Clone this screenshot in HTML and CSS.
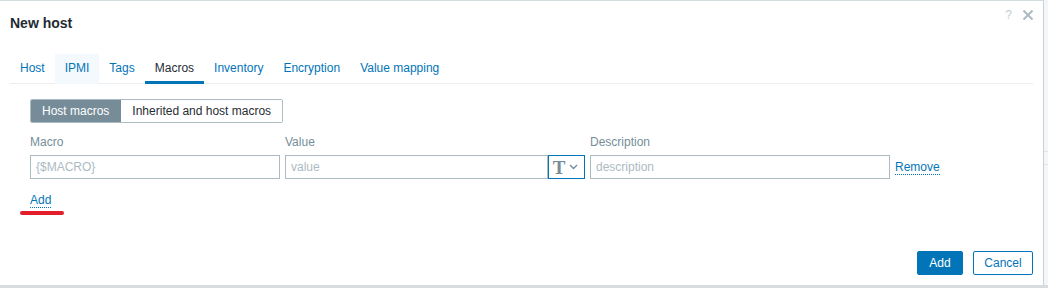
FILE: index.html
```html
<!DOCTYPE html>
<html lang="en">
<head>
    <meta charset="UTF-8">
    <meta name="viewport" content="width=device-width, initial-scale=1.0">
    <title>New host</title>
    <link rel="stylesheet" href="styles.css">
</head>
<body>
    <div class="page">
        <div class="dialog">
            <!-- Header -->
            <div class="dialog-header">
                <h4>New host</h4>
                <div class="header-controls">
                    <span class="help-btn">?</span>
                    <span class="close-btn">
                        <svg width="12" height="12" viewBox="0 0 12 12"><path d="M1.5 1.5 L10.5 10.5 M10.5 1.5 L1.5 10.5" stroke="#acbbc2" stroke-width="2" fill="none"/></svg>
                    </span>
                </div>
            </div>

            <!-- Tabs -->
            <ul class="tabs">
                <li><a href="#">Host</a></li>
                <li class="hover"><a href="#">IPMI</a></li>
                <li><a href="#">Tags</a></li>
                <li class="active"><a href="#">Macros</a></li>
                <li><a href="#">Inventory</a></li>
                <li><a href="#">Encryption</a></li>
                <li><a href="#">Value mapping</a></li>
            </ul>

            <!-- Macros tab -->
            <div class="tab-body">
                <div class="radio-segmented">
                    <span class="seg selected">Host macros</span>
                    <span class="seg">Inherited and host macros</span>
                </div>

                <div class="macro-table">
                    <div class="col-label">Macro</div>
                    <div class="col-label">Value</div>
                    <div class="col-label">Description</div>
                    <div></div>

                    <input class="field macro-field" type="text" placeholder="{$MACRO}">
                    <div class="value-group">
                        <input class="field" type="text" placeholder="value">
                        <button class="type-btn">
                            <span class="type-t">T</span>
                            <svg width="9" height="6" viewBox="0 0 9 6"><path d="M1 1 L4.5 4.5 L8 1" stroke="#768d99" stroke-width="1.4" fill="none"/></svg>
                        </button>
                    </div>
                    <input class="field desc-field" type="text" placeholder="description">
                    <a class="link-action" href="#">Remove</a>
                </div>

                <a class="link-action add-link" href="#">Add</a>
                <div class="marker"></div>
            </div>

            <!-- Footer -->
            <div class="dialog-footer">
                <button class="btn btn-primary">Add</button>
                <button class="btn btn-alt">Cancel</button>
            </div>
        </div>
        <div class="backdrop-edge">
            <div class="edge-line"></div>
            <div class="edge-line"></div>
        </div>
    </div>
</body>
</html>
```

FILE: styles.css
```css
* {
    box-sizing: border-box;
}

body {
    margin: 0;
    font-family: "Liberation Sans", Arial, sans-serif;
    font-size: 12px;
    color: #1f2c33;
    background: #d6dcdf;
}

.page {
    display: flex;
    height: 288px;
    overflow: hidden;
}

/* Dialog */
.dialog {
    width: 1044px;
    height: 285px;
    background: #fff;
    border-top: 1px solid #d5dde1;
    border-right: 1px solid #c8d0d4;
    display: flex;
    flex-direction: column;
    flex-shrink: 0;
}

.backdrop-edge {
    flex: 1;
    background: #f4f6f7;
    height: 285px;
    padding-top: 151px;
}

.edge-line {
    height: 1px;
    background: #dfe4e7;
    margin-bottom: 12px;
}

.dialog-header {
    display: flex;
    justify-content: space-between;
    padding: 0 9px 0 10px;
    height: 42px;
    align-items: flex-start;
}

.dialog-header h4 {
    margin: 14px 0 0;
    font-size: 14px;
    font-weight: bold;
    color: #1f2c33;
}

.header-controls {
    display: flex;
    gap: 10px;
    margin-top: 7px;
    align-items: center;
}

.help-btn {
    color: #c3ced3;
    font-size: 12px;
}

.close-btn {
    display: flex;
}

/* Tabs */
.tabs {
    list-style: none;
    margin: 11px 10px 0;
    padding: 0;
    display: flex;
    border-bottom: 1px solid #ebeef0;
}

.tabs li {
    height: 30px;
    padding: 0 10px;
    display: flex;
    align-items: center;
    border-bottom: 3px solid transparent;
    margin-bottom: -1px;
    padding-top: 1px;
}

.tabs li a {
    color: #0275b8;
    text-decoration: none;
}

.tabs li.hover {
    background: #f3f9fd;
}

.tabs li.active {
    border-bottom-color: #0275b8;
}

.tabs li.active a {
    color: #1f2c33;
}

/* Body */
.tab-body {
    padding: 15px 30px 0;
    flex: 1;
}

.radio-segmented {
    display: inline-flex;
    border: 1px solid #acbbc2;
    border-radius: 2px;
    height: 24px;
    overflow: hidden;
}

.seg {
    padding: 0 11px;
    display: flex;
    align-items: center;
    color: #1f2c33;
    background: #fff;
}

.seg.selected {
    background: #768d99;
    color: #fff;
    border-right: 1px solid #768d99;
}

.macro-table {
    display: grid;
    grid-template-columns: 250px 300px 300px auto;
    column-gap: 5px;
    margin-top: 10px;
    align-items: center;
}

.col-label {
    color: #768d99;
    height: 22px;
    line-height: 16px;
    padding-top: 1px;
}

.field {
    height: 24px;
    border: 1px solid #acbbc2;
    border-radius: 0;
    padding: 0 5px;
    font-family: inherit;
    font-size: 12px;
    color: #1f2c33;
    outline: none;
    width: 100%;
}

.field::placeholder {
    color: #acbbc2;
}

.value-group {
    display: flex;
}

.value-group .field {
    flex: 1;
    width: auto;
}

.type-btn {
    width: 37px;
    height: 24px;
    border: 1px solid #0275b8;
    background: #fff;
    display: flex;
    align-items: center;
    justify-content: center;
    gap: 4px;
    padding: 0 2px 0 0;
}

.type-t {
    font-family: "Liberation Serif", serif;
    font-weight: bold;
    font-size: 19px;
    color: #768d99;
    line-height: 1;
}

.link-action {
    color: #0275b8;
    text-decoration: none;
    border-bottom: 1px dotted #0275b8;
    justify-self: start;
    line-height: 14px;
}

.add-link {
    display: inline-block;
    margin-top: 14px;
}

.marker {
    width: 44px;
    height: 4px;
    background: #e31e2a;
    border-radius: 2px;
    margin: 3px 0 0 -10px;
}

/* Footer */
.dialog-footer {
    display: flex;
    justify-content: flex-end;
    gap: 10px;
    padding: 0 10px 10px;
}

.btn {
    height: 24px;
    padding: 0;
    font-family: inherit;
    font-size: 12px;
    border-radius: 2px;
    cursor: pointer;
}

.btn-primary {
    width: 46px;
    background: #0275b8;
    border: 1px solid #0275b8;
    color: #fff;
}

.btn-alt {
    width: 60px;
    background: #fff;
    border: 1px solid #0275b8;
    color: #0275b8;
}
```
